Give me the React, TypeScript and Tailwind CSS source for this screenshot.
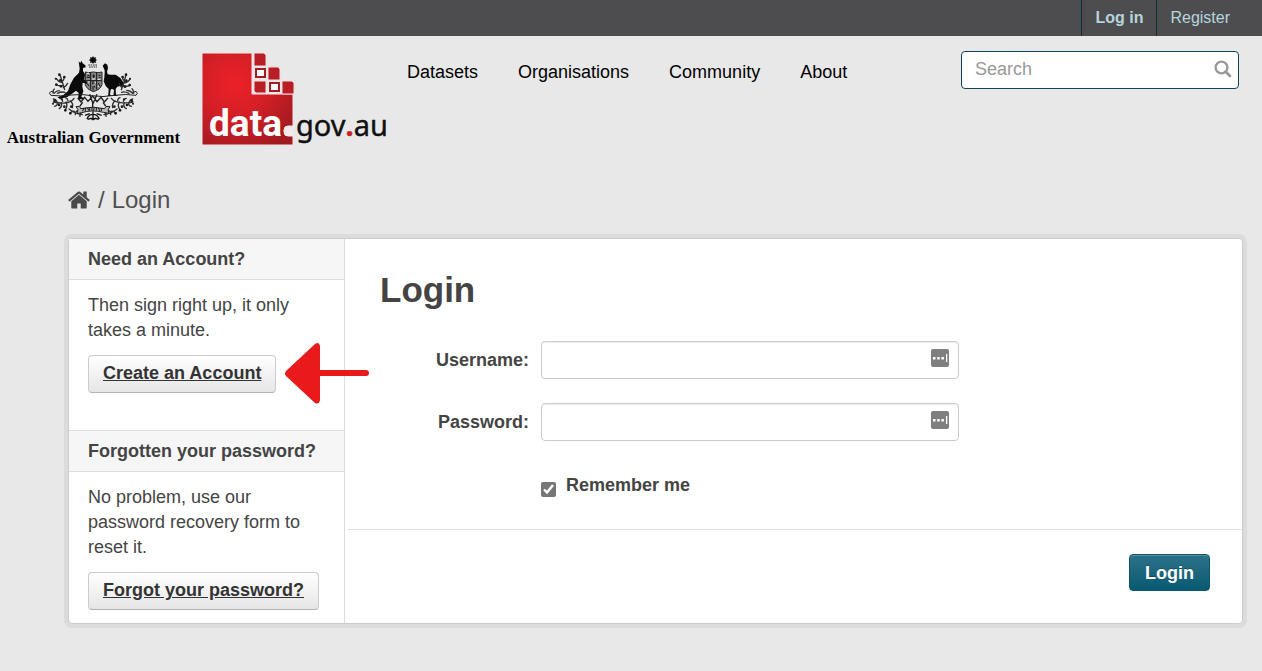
import type { ReactNode } from "react";

function CoatOfArms() {
  return (
    <svg viewBox="0 0 300 225" className="h-[75px] w-[100px]" aria-hidden="true" fill="#0a0a0a">
      <path d="M147 18l3 6 6-3-2 7 6 2-6 3 3 6-7-2-3 5-3-5-6 2 2-6-6-3 6-2-2-7 6 3z" />
      <circle cx="147" cy="30" r="8" />
      <path d="M133 45h28M135 51h24" stroke="#333" strokeWidth="3" strokeDasharray="5 2" />
      <path d="M124 66q8 4 24 0 16 4 26 0v38q-5 15-26 21-20-7-24-21z" fill="#888" stroke="#222" strokeWidth="3" />
      <path d="M140 67v52M158 67v52M125 92h48M130 77h7M128 82h11M163 76h7M164 83h6M145 78h8M149 73v12M129 100l7 9M145 99l8 14M163 99l5 10M147 92v30" stroke="#161616" strokeWidth="3" fill="none" />
      <path d="M129 70h6M144 87h9M161 88h8M132 96h5M145 105h6M161 109h4M153 97h3" stroke="#eee" strokeWidth="3" />
      <path d="M104 34l5 5 3-7 4 8 8 6 1 6-8 2v9l6 10-2 16 9 8-1 4-13-3-1 12 3 14-6 17 8 3v4h-18l2-19-8-7-12 9-14 10-21 5-9-4 17-6 15-13 7-20 11-20 15-15 2-12z" />
      <path d="M176 47l7-7 7 4 2 10-3 11 2 8 9 1 15 0 14 10 9 13 3 13-12-2-9 2-5 7 1 17 6 4h-14l2-18-6-4-4 3-2 14 4 5h-12l3-4 1-17-9-9-6-14 2-12 1-14 0-7z" />
      <path d="M20 135q-8-6 1-11 9 0 6 7M20 136q30 4 62-1 34-4 60 2 35 6 70-1 34-5 64 0 8-6 0-12-10 1-7 8" fill="none" stroke="#222" strokeWidth="3" />
      <g fill="none" stroke="#2e2e2e" strokeWidth="4" strokeLinecap="round">
        <path d="M62 119Q54 92 48 75M54 98q-12-3-17-12M57 106q-10 3-20-1M53 95q7-3 8-14M58 113q10-5 13-13" />
        <path d="M232 119q9-24 14-44M241 99q13-3 17-13M236 107q12 4 22-1M243 94q-8-5-8-14M234 113q-6-5-8-12" />
        <path d="M30 130q7-8 16-8M40 130q14-6 23-3M28 126q-2-6 3-9M266 130q-7-9-18-9M255 130q-14-7-22-3M268 126q1-6-4-10" />
        <path d="M28 156q18 4 34 3 20-2 28-14M40 158q1 9-8 11M52 158q3 12-6 18M66 156q6 12-2 23M79 152q10 9 6 21M39 154q-4-7-11-7M56 154q-2-9-9-9M72 152q-2-8-8-9" />
        <path d="M267 156q-20 4-36 2-21-2-29-13M254 158q-2 9 8 11M241 158q-5 12 6 18M226 156q-7 12 2 23M213 152q-10 9-7 21M256 154q5-7 10-7M238 154q3-9 9-9M221 152q1-8 7-9" />
        <path d="M75 177q17 14 40 17M78 189q9-8 13-5M94 194q-1-10 8-12M108 199q-1-9 4-11M219 177q-17 14-39 17M215 189q-8-8-13-5M200 194q2-10-7-12M186 199q1-9-4-11" />
      </g>
      <g fill="#191919">
        <circle cx="46" cy="74" r="4" /><circle cx="35" cy="86" r="3" /><circle cx="61" cy="81" r="4" /><circle cx="37" cy="104" r="4" /><circle cx="49" cy="91" r="4" /><circle cx="51" cy="109" r="4" />
        <circle cx="246" cy="74" r="4" /><circle cx="258" cy="86" r="3" /><circle cx="236" cy="81" r="4" /><circle cx="257" cy="105" r="4" /><circle cx="247" cy="92" r="4" /><circle cx="243" cy="110" r="4" />
        <circle cx="32" cy="152" r="4" /><circle cx="45" cy="165" r="4" /><circle cx="61" cy="170" r="4" /><circle cx="64" cy="181" r="4" /><circle cx="82" cy="170" r="4" /><circle cx="27" cy="161" r="3" /><circle cx="54" cy="148" r="3" /><circle cx="79" cy="190" r="4" />
        <circle cx="263" cy="152" r="4" /><circle cx="249" cy="165" r="4" /><circle cx="234" cy="170" r="4" /><circle cx="228" cy="181" r="4" /><circle cx="211" cy="170" r="4" /><circle cx="267" cy="161" r="3" /><circle cx="240" cy="148" r="3" /><circle cx="215" cy="190" r="4" />
      </g>
      <path d="M101 144l10 12 11-14 10 12 14-16 13 17 12-13 10 14 11-12M116 157l-8 11M177 157l8 11M137 133l10 28 12-28M146 155v17" fill="none" stroke="#1c1c1c" strokeWidth="4" />
      <path d="M96 170l11-1 3 7q38-9 72 0l4-7 12 1-6 10 3 10-17-3q-34-9-65 1l-14 3 3-12z" fill="#bbb" stroke="#1c1c1c" strokeWidth="3" />
      <path d="M119 174l-3 10M124 173v10M130 173l5 9M137 173v9M144 171v10M151 173l-3 9M157 173v9M163 174l5 9M172 174v9" stroke="#111" strokeWidth="3" />
      <path d="M147 184v24M147 193q-13 0-18 14M147 193q13 0 19 14M137 191l-14 5M158 191l15 5M131 208l10-3 6 4 7-4 10 3" fill="none" stroke="#111" strokeWidth="4" />
    </svg>
  );
}

function DataGovLogo() {
  return (
    <svg viewBox="0 0 200 100" className="h-[100px] w-[200px]" role="img" aria-label="data.gov.au">
      <defs>
        <radialGradient id="logo-red" gradientUnits="userSpaceOnUse" cx="40" cy="34" r="72">
          <stop offset="0" stopColor="#ec2127" />
          <stop offset="0.45" stopColor="#d41f26" />
          <stop offset="1" stopColor="#a01a20" />
        </radialGradient>
      </defs>
      <path d="M7 3H57V44H98V76H93q-4 0-4 4v2q0 4 4 4H98V95H7z" fill="url(#logo-red)" stroke="#f5e6e6" />
      <g fill="#b91e25" stroke="#f1dcdc">
        <path d="M59 3h10l2 2v11H59zM73 17h10l2 2v11H73zM87 31h10l2 2v11H87zM59 31h12v12H61l-2-2z" />
      </g>
      <g fill="#fff" stroke="#a51c22" strokeWidth="2">
        <path d="M61 19h9v8h-9zM75 33h9v8h-9z" />
      </g>
      <text x="14" y="86" fontFamily="Roboto, sans-serif" fontWeight="700" fontSize="37" fill="#fff">data</text>
      <rect x="90" y="78" width="8" height="8" rx="2" fill="#f3eaea" />
      <text x="101" y="86" fontFamily="'Noto Sans', sans-serif" fontSize="29" fill="#111" stroke="#111" strokeWidth="0.400">
        gov<tspan fill="#c8202a" stroke="#c8202a" fontWeight="700">.</tspan>au
      </text>
    </svg>
  );
}

function HomeIcon() {
  return (
    <svg viewBox="0 0 1792 1792" className="size-6" fill="#4a4a4a" aria-hidden="true">
      <path d="M1472 992v480q0 26-19 45t-45 19h-384v-384H768v384H384q-26 0-45-19t-19-45V992q0-1 .5-3t.5-3l575-474 575 474q1 2 1 6zm223-69l-62 74q-8 9-21 11h-3q-13 0-21-7L896 424l-692 577q-12 8-24 7-13-2-21-11l-62-74q-8-10-7-23.500t11-21.500l719-599q32-26 76-26t76 26l244 204V288q0-14 9-23t23-9h192q14 0 23 9t9 23v408l219 182q10 8 11 21.500t-7 23.500z" />
    </svg>
  );
}

function SearchIcon() {
  return (
    <svg viewBox="0 0 18 18" className="size-[18px]" fill="none" stroke="#999" aria-hidden="true">
      <circle cx="7.500" cy="7.500" r="5.900" strokeWidth="2.400" />
      <path d="M12 12l4 4" strokeWidth="2.800" strokeLinecap="round" />
    </svg>
  );
}

function PasswordManagerIcon() {
  return (
    <svg viewBox="0 0 18 18" className="pointer-events-none absolute top-2 right-[10px] size-[18px]" aria-hidden="true">
      <rect width="18" height="18" rx="2" fill="#7f7f7f" />
      <path d="M2 8h2.500v2.500H2zM6.200 8h2.500v2.500H6.200zM10.400 8h2.500v2.500h-2.500zM15 5h1.300v8H15z" fill="#fff" />
    </svg>
  );
}

function Arrow() {
  return (
    <svg viewBox="0 0 84 62" className="absolute top-[-13px] left-[197px] h-[62px] w-[84px]" fill="#e81a1c" aria-hidden="true">
      <path d="M1 29L30 2q4-3 5 2v24h46q3 0 3 3t-3 3H35v24q-1 5-5 3L1 34q-2-2 0-5z" />
    </svg>
  );
}

const navItems = ["Datasets", "Organisations", "Community", "About"];

function SideSection({ title, text, action, children }: { title: string; text: string; action: string; children?: ReactNode }) {
  return (
    <section>
      <h2 className="border-b border-[#ddd] bg-[#f6f6f6] px-[19px] py-2 text-lg/6 font-bold">{title}</h2>
      <div className="px-[19px] pt-[13px] pb-3">
        <p className="text-lg/[25px]">{text}</p>
        <div className="relative mt-3 flex">
          <a
            href="#"
            className="rounded-[4px] border border-[#ccc] border-b-[#b3b3b3] bg-linear-to-b from-white to-[#e6e6e6] px-[14px] pt-[5px] pb-[6px] text-lg/[25px] font-bold text-[#333] underline"
          >
            {action}
          </a>
          {children}
        </div>
      </div>
    </section>
  );
}

function Field({ id, label, type }: { id: string; label: string; type: string }) {
  return (
    <div className="flex items-center gap-3">
      <label htmlFor={id} className="w-[149px] text-right text-lg/6 font-bold">
        {label}
      </label>
      <div className="relative w-[418px]">
        <input
          id={id}
          type={type}
          className="block h-[38px] w-full rounded-[4px] border border-[#ccc] bg-white pr-10 pl-3 text-lg shadow-[inset_0_1px_1px_rgba(0,0,0,0.075)] outline-none"
        />
        <PasswordManagerIcon />
      </div>
    </div>
  );
}

export default function App() {
  return (
    <div className="min-h-screen bg-[#e8e8e8] font-['Liberation_Sans',Arial,sans-serif] text-[#444]">
      <div className="flex h-9 justify-end bg-[#4d4d4f] pr-[19px] text-base text-[#b7d5de]">
        <a href="#" className="flex items-center border-l border-[#06303b] px-[13px] font-bold">Log in</a>
        <a href="#" className="flex items-center border-l border-[#06303b] px-[13px]">Register</a>
      </div>

      <header className="flex items-start pr-[23px]">
        <a href="#" className="flex w-[187px] flex-col items-center pt-[14px] text-black">
          <CoatOfArms />
          <span className="pt-px font-['Liberation_Serif',serif] text-[17px]/6 font-bold whitespace-nowrap">Australian Government</span>
        </a>
        <a href="#" className="ml-2 pt-[14px]"><DataGovLogo /></a>
        <nav className="ml-3 flex gap-10 pt-6 text-lg/6 text-black">
          {navItems.map((item) => (
            <a key={item} href="#">{item}</a>
          ))}
        </nav>
        <form className="relative mt-[15px] ml-auto w-[278px]">
          <input
            type="search"
            aria-label="Search"
            placeholder="Search"
            className="block h-[38px] w-full rounded-[4px] border border-[#0f4456] bg-white pr-9 pb-[2px] pl-[13px] text-lg outline-none placeholder:text-[#999]"
          />
          <button type="button" aria-label="Submit search" className="absolute top-[9px] right-[7px]"><SearchIcon /></button>
        </form>
      </header>

      <main className="pt-8 pr-[15px] pb-10 pl-16">
        <nav aria-label="Breadcrumb" className="flex h-9 items-center gap-[7px] pl-[3px] text-2xl text-[#505050]">
          <a href="#" aria-label="Home"><HomeIcon /></a>
          <span>/</span>
          <a href="#">Login</a>
        </nav>

        <div className="mt-4 rounded-lg bg-[#dcdcdc] p-1">
          <div className="flex rounded-[4px] border border-[#ccc] bg-white">
            <aside className="w-[276px] shrink-0 border-r border-[#ddd]">
              <SideSection title="Need an Account?" text="Then sign right up, it only takes a minute." action="Create an Account">
                <Arrow />
              </SideSection>
              <div className="mt-[25px] border-t border-[#ddd]">
                <SideSection title="Forgotten your password?" text="No problem, use our password recovery form to reset it." action="Forgot your password?" />
              </div>
            </aside>
            <form className="flex-1">
              <div className="px-[35px] pt-[30px]">
                <h1 className="text-[35px]/[42px] font-bold">Login</h1>
                <div className="mt-[30px] flex flex-col gap-6">
                  <Field id="username" label="Username:" type="text" />
                  <Field id="password" label="Password:" type="password" />
                </div>
                <div className="mt-8 ml-[161px] flex items-center gap-[10px]">
                  <input id="remember" type="checkbox" defaultChecked className="mt-2 size-[15px] accent-[#767676]" />
                  <label htmlFor="remember" className="text-lg/6 font-bold">Remember me</label>
                </div>
              </div>
              <div className="mt-8 ml-[3px] flex justify-end border-t border-[#e2e2e2] px-8 pt-6 pb-8">
                <button
                  type="button"
                  className="h-[37px] rounded-[4px] border border-[#10566b] bg-linear-to-b from-[#2b7288] to-[#055a72] px-[15px] text-lg/6 font-bold text-white shadow-[inset_0_1px_0_rgba(255,255,255,0.2)] text-shadow-[0_-1px_0_rgba(0,0,0,0.25)]"
                >
                  Login
                </button>
              </div>
            </form>
          </div>
        </div>
      </main>
    </div>
  );
}
